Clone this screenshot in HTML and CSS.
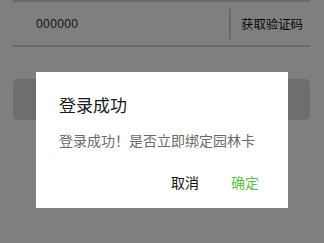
FILE: index.html
```html
<!DOCTYPE html>
<html lang="zh-CN">
<head>
<meta charset="utf-8">
<link rel="stylesheet" href="styles.css">
</head>
<body>
<div class="page">
  <div class="line"></div>
  <div class="row">
    <div class="code">000000</div>
    <div class="divider"></div>
    <div class="get">获取验证码</div>
  </div>
  <div class="line"></div>
  <div class="btn"></div>
</div>
<div class="overlay">
  <div class="dialog">
    <div class="title">登录成功</div>
    <div class="msg">登录成功！是否立即绑定园林卡</div>
    <div class="actions">
      <span class="cancel">取消</span>
      <span class="ok">确定</span>
    </div>
  </div>
</div>
</body>
</html>
```
FILE: styles.css
```css
html, body {
  margin: 0;
  padding: 0;
  background: #ffffff;
  font-family: "Noto Sans CJK SC", "Liberation Sans", sans-serif;
  width: 324px;
  height: 243px;
  overflow: hidden;
}
.page {
  padding: 0 14px 0 13px;
}
.line {
  height: 2px;
  background: #d2d2d2;
}
.row {
  display: flex;
  align-items: center;
  height: 43px;
}
.code {
  flex: 1;
  padding-left: 23px;
  font-family: "Liberation Sans", sans-serif;
  font-size: 12px;
  color: #2a2a2a;
  letter-spacing: 0.4px;
}
.divider {
  width: 2px;
  height: 30px;
  background: #cfcfcf;
  margin-right: 10px;
}
.get {
  font-size: 12.4px;
  color: #111;
  padding-right: 7px;
}
.btn {
  margin-top: 32px;
  height: 41px;
  border-radius: 5px;
  background: #dcdcdc;
}
.overlay {
  position: fixed;
  inset: 0;
  background: rgba(0, 0, 0, 0.5);
  display: flex;
  flex-direction: column;
  align-items: center;
  padding-top: 72px;
}
.dialog {
  width: 252px;
  height: 136px;
  box-sizing: border-box;
  background: #fff;
  padding: 22px 29px 0 23px;
  display: flex;
  flex-direction: column;
}
.title {
  font-size: 17px;
  line-height: 22px;
  color: #1a1a1a;
}
.msg {
  margin-top: 14px;
  font-size: 14px;
  line-height: 20px;
  color: #6a6a6a;
  white-space: nowrap;
}
.actions {
  margin-top: 22px;
  display: flex;
  justify-content: flex-end;
  gap: 32px;
  font-size: 14px;
  line-height: 20px;
}
.cancel {
  color: #111;
}
.ok {
  color: #5cbf4a;
}
```
